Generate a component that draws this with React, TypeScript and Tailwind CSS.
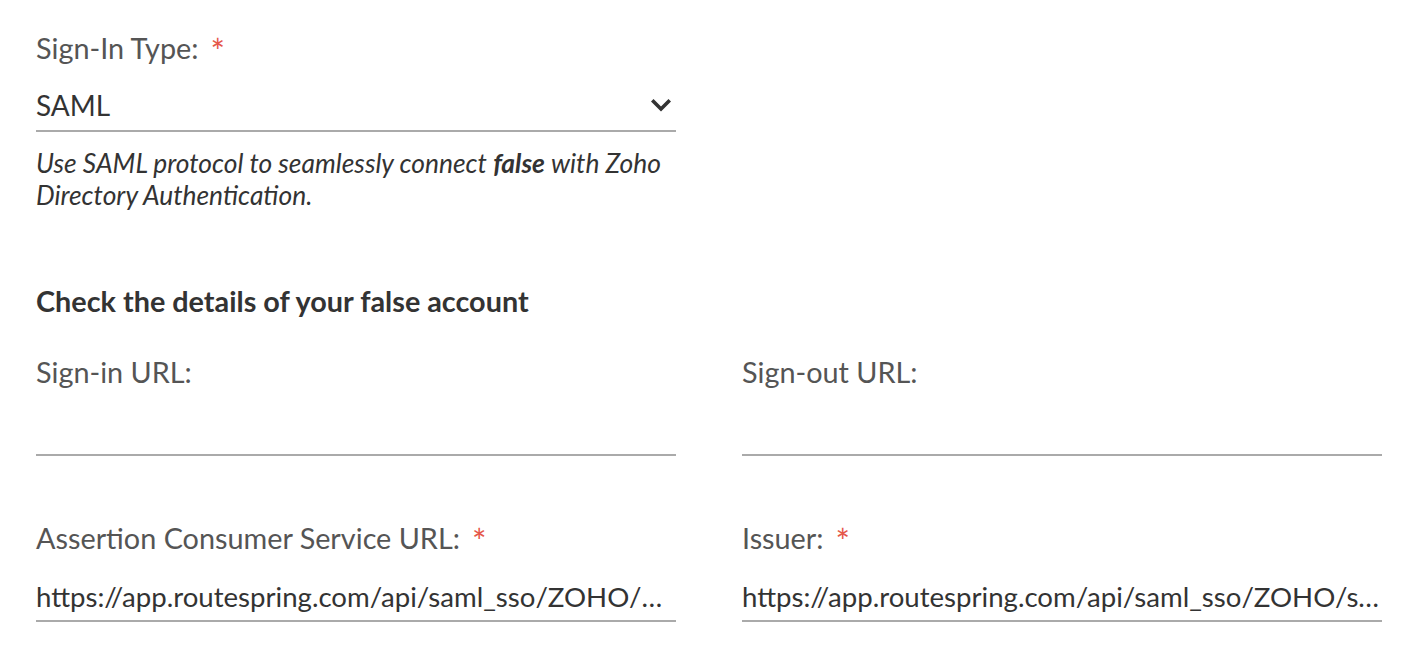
import React from "react";

const Star = ({ ml = "ml-[12px]" }: { ml?: string }) => (
  <span className={`${ml} text-[#e5574a] text-[34px] leading-none relative top-[3px] font-['Lato','Liberation_Sans',sans-serif]`}>
    *
  </span>
);

function Field({ label, required, value }: { label: string; required?: boolean; value?: string }) {
  return (
    <div className="w-[640px]">
      <div className="h-[36px] leading-[36px] text-[28.8px] text-[#555555] flex items-center">
        <span>{label}</span>
        {required && <Star />}
      </div>
      <div className="mt-[23px] h-[36px] leading-[36px] text-[27.6px] text-[#333333] whitespace-nowrap overflow-hidden">
        {value ?? ""}
      </div>
      <div className="mt-[5px] h-[2px] bg-[#aaaaaa]" />
    </div>
  );
}

export default function App() {
  return (
    <div className="min-h-[648px] bg-white pl-[36px] pt-[30px] font-['Lato','Liberation_Sans',sans-serif]">
      <div className="w-[640px]">
        <div className="h-[36px] leading-[36px] text-[28.8px] text-[#555555] flex items-center">
          <span>Sign-In Type:</span>
          <Star ml="ml-[12px]" />
        </div>
        <div className="mt-[21px] h-[36px] flex items-center justify-between text-[28px] text-[#333333]">
          <span>SAML</span>
          <svg width="20" height="14" viewBox="0 0 20 14" className="mr-[5px]">
            <path d="M2.5 3.5 L10 11 L17.5 3.5" fill="none" stroke="#333333" strokeWidth="3.6" strokeLinecap="square" />
          </svg>
        </div>
        <div className="mt-[7px] h-[2px] bg-[#aaaaaa]" />
        <p className="mt-[15px] text-[26.4px] leading-[32px] italic text-[#333333]">
          Use SAML protocol to seamlessly connect <b className="font-bold">false</b> with Zoho Directory Authentication.
        </p>
      </div>
      <h2 className="mt-[74px] text-[28.8px] leading-[32px] font-bold text-[#333333]">
        Check the details of your false account
      </h2>
      <div className="mt-[37px] grid grid-cols-[640px_640px] gap-x-[66px] gap-y-[64px]">
        <Field label="Sign-in URL:" />
        <Field label="Sign-out URL:" />
        <Field label="Assertion Consumer Service URL:" required value="https://app.routespring.com/api/saml_sso/ZOHO/…" />
        <Field label="Issuer:" required value="https://app.routespring.com/api/saml_sso/ZOHO/s…" />
      </div>
    </div>
  );
}
